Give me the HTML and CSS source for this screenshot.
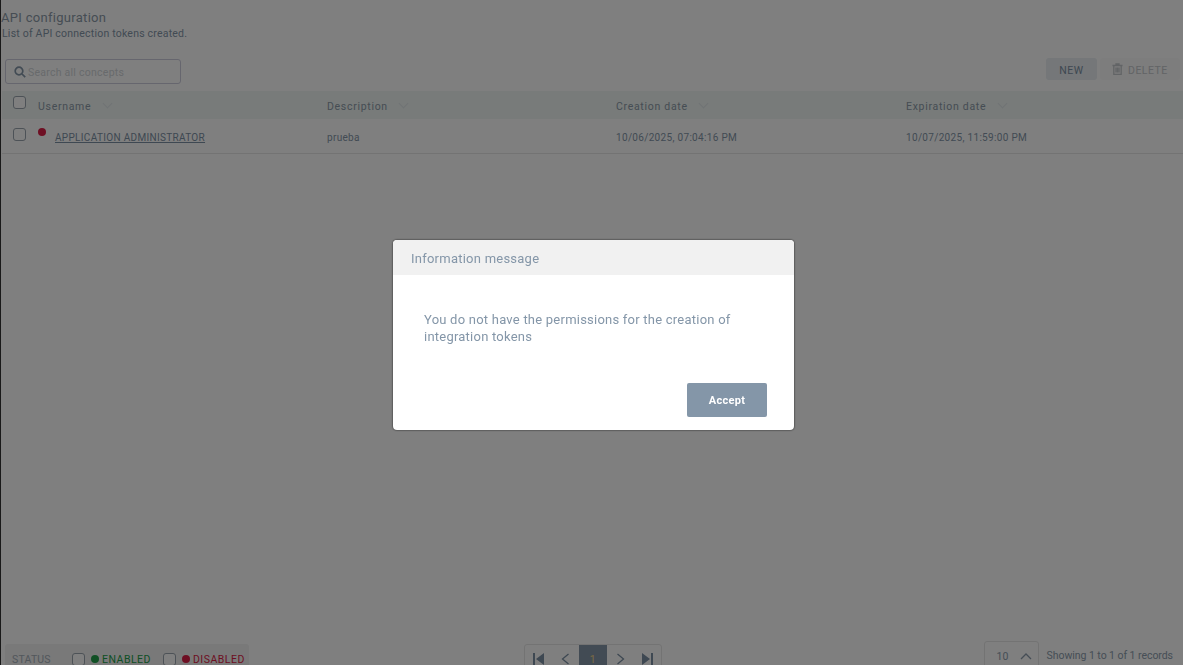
FILE: index.html
```html
<!DOCTYPE html>
<html>
	<head>
		<title>API configuration</title>
		<link rel="stylesheet" href="styles.css">
	</head>
	<body>
		<div class="page">
			<div class="head">
				<h4>API configuration</h4>
				<p>List of API connection tokens created.</p>
			</div>
			<div class="tools">
				<div class="search">
					<svg width="12" height="12" viewBox="0 0 12 12"><circle cx="5" cy="5" r="3.8"/><path d="M8 8l3.2 3.2"/></svg>
					<span>Search all concepts</span>
				</div>
				<div class="actions">
					<button class="b_new" type="button">NEW</button>
					<button class="b_del" type="button">
						<svg width="11" height="12" viewBox="0 0 11 12"><path d="M0.5 2.5h10M4 2.5v-1.5h3v1.5M1.8 2.5v9h7.4v-9M4 4.5v5M5.5 4.5v5M7 4.5v5"/></svg>
						DELETE
					</button>
				</div>
			</div>
			<div class="row row_head">
				<span class="box"></span>
				<div class="cols">
					<div>Username <i class="caret"></i></div>
					<div>Description <i class="caret"></i></div>
					<div>Creation date <i class="caret"></i></div>
					<div>Expiration date <i class="caret"></i></div>
				</div>
			</div>
			<div class="row row_item">
				<span class="box"></span>
				<div class="cols">
					<div class="user"><i class="dot red"></i><a href="#">APPLICATION ADMINISTRATOR</a></div>
					<div>prueba</div>
					<div>10/06/2025, 07:04:16 PM</div>
					<div>10/07/2025, 11:59:00 PM</div>
				</div>
			</div>
			<div class="foot">
				<div class="status">
					<span class="st_label">STATUS</span>
					<span class="box"></span><i class="dot green"></i><span class="on">ENABLED</span>
					<span class="box"></span><i class="dot red"></i><span class="off">DISABLED</span>
				</div>
				<div class="pager">
					<span><svg width="13" height="12" viewBox="0 0 13 12"><path class="fill" d="M1 0h2v12h-2zM12 0v12l-8-6z"/></svg></span>
					<span><svg width="9" height="12" viewBox="0 0 9 12"><path d="M7.5 1l-6 5 6 5"/></svg></span>
					<span class="cur">1</span>
					<span><svg width="9" height="12" viewBox="0 0 9 12"><path d="M1.5 1l6 5-6 5"/></svg></span>
					<span><svg width="13" height="12" viewBox="0 0 13 12"><path class="fill" d="M1 0l8 6-8 6zM10 0h2v12h-2z"/></svg></span>
				</div>
				<div class="records">
					<div class="size">
						<span>10</span>
						<svg width="12" height="8" viewBox="0 0 12 8"><path d="M1 7l5-5 5 5"/></svg>
					</div>
					<span class="showing">Showing 1 to 1 of 1 records</span>
				</div>
			</div>
		</div>
		<div class="overlay">
			<div class="modal">
				<div class="m_head">Information message</div>
				<div class="m_body">You do not have the permissions for the creation of integration tokens</div>
				<div class="m_foot"><button type="button">Accept</button></div>
			</div>
		</div>
	</body>
</html>
```
FILE: styles.css
```css
html, body{
	margin: 0;
	height: 100%;
	overflow: hidden;
	background-color: #fff;
}
*{
	box-sizing: border-box;
}
body{
	font-family: Roboto, "Liberation Sans", sans-serif;
	color: #8496a8;
}
i{
	display: inline-block;
	font-style: normal;
}
button{
	font-family: inherit;
	border: none;
	cursor: pointer;
}
svg{
	fill: none;
	stroke: currentColor;
	stroke-width: 1.3;
}
svg .fill{
	fill: currentColor;
	stroke: none;
}
.page{
	display: flex;
	flex-direction: column;
	height: 690px;
	padding-left: 1px;
	border-left: 1px solid #333;
}
.head{
	padding-top: 10px;
	height: 59px;
}
.head h4{
	margin: 0 0 0 -1px;
	font-size: 13px;
	font-weight: 400;
	line-height: 15px;
	letter-spacing: .3px;
	color: #8c9aa8;
}
.head p{
	margin: 2px 0 0;
	font-size: 10.5px;
	line-height: 14px;
	letter-spacing: .21px;
}
.tools{
	display: flex;
	justify-content: space-between;
	height: 32px;
	padding: 0 3px 0 3px;
}
.search{
	display: flex;
	align-items: center;
	gap: 2px;
	width: 176px;
	height: 25px;
	padding: 2px 0 0 8px;
	border: 1px solid #ccd;
	border-radius: 3px;
	font-size: 10.5px;
	letter-spacing: .25px;
	color: #d0d4d8;
}
.search svg{
	color: #8496a8;
	stroke-width: 1.7;
	margin-top: -2px;
}
.actions{
	display: flex;
	gap: 3px;
	height: 22px;
	margin-top: -1px;
}
.b_new{
	width: 51px;
	padding-top: 3px;
	border-radius: 3px;
	background: #eaeef2;
	font-size: 10.5px;
	letter-spacing: .5px;
	color: #7c90a4;
}
.b_del{
	display: flex;
	align-items: center;
	gap: 5px;
	width: 80px;
	padding: 3px 0 0 12px;
	border-radius: 3px;
	background: #fafafa;
	font-size: 10.5px;
	letter-spacing: .5px;
	color: #c4c8cc;
}
.b_del svg{
	margin-top: -3px;
}
.row{
	display: flex;
	flex: none;
	padding-left: 11px;
	font-size: 10px;
	letter-spacing: .32px;
}
.row_head{
	height: 28px;
	align-items: center;
	background: #f0f7f4;
	font-size: 10.5px;
	letter-spacing: .7px;
	color: #8c9aa8;
}
.row_head .box{
	margin-top: -5px;
}
.row_head .cols{
	padding-top: 2px;
}
.row_item{
	height: 35px;
	align-items: center;
	border-bottom: 1px solid #e6e6e6;
}
.row_item .box{
	margin-top: -3px;
}
.row_item .cols{
	padding-top: 2px;
}
.box{
	display: inline-block;
	flex: none;
	width: 13px;
	height: 13px;
	border: 1px solid #9aa4ae;
	border-radius: 3px;
	background: #fff;
}
.cols{
	display: grid;
	grid-template-columns: 289px 289px 290px 1fr;
	flex: 1;
	margin-left: 12px;
}
.caret{
	width: 7px;
	height: 7px;
	margin: 0 0 3px 9px;
	border-right: 1px solid #e0e6ea;
	border-bottom: 1px solid #e0e6ea;
	transform: rotate(45deg);
}
.dot{
	flex: none;
	width: 8px;
	height: 8px;
	border-radius: 50%;
}
.red{
	background: #dc1e46;
}
.green{
	background: #22a04a;
}
.user{
	display: flex;
	align-items: center;
	gap: 9px;
}
.user .dot{
	margin-top: -10px;
}
.user a{
	color: #7c90a4;
}
.foot{
	display: flex;
	justify-content: space-between;
	margin-top: auto;
	height: 49px;
	padding: 0 10px 0 3px;
}
.status{
	display: flex;
	align-items: center;
	align-self: flex-end;
	width: 244px;
	height: 46px;
	padding: 0 0 16px 7px;
	border-radius: 3px;
	background: #f2f2f2;
	font-size: 10.5px;
	letter-spacing: .5px;
}
.status .box{
	margin-right: 6px;
}
.st_label{
	width: 60px;
	letter-spacing: .2px;
	color: #a4aeb8;
}
.status .dot{
	margin-right: 3px;
}
.on{
	margin-right: 12px;
	color: #22a04a;
}
.off{
	color: #dc1e46;
}
.pager{
	display: flex;
	align-self: flex-end;
	height: 46px;
	margin-right: 47px;
	border: 1px solid #e6e6e6;
	border-radius: 3px;
	color: #7c90a4;
}
.pager span{
	display: flex;
	align-items: center;
	justify-content: center;
	width: 27px;
	padding-bottom: 16px;
}
.pager .cur{
	width: 28px;
	background: #8496a8;
	font-size: 10.5px;
	color: #f4d488;
}
.records{
	display: flex;
	align-items: flex-start;
	gap: 8px;
	font-size: 10.5px;
	letter-spacing: .42px;
}
.size{
	display: flex;
	align-items: center;
	justify-content: space-between;
	width: 55px;
	height: 49px;
	padding: 0 6px 19px 12px;
	border: 1px solid #e6e6e6;
	border-radius: 3px;
	letter-spacing: 0;
	color: #8c9cac;
}
.showing{
	margin-top: 8px;
	letter-spacing: -.05px;
	color: #8c9cac;
}
.overlay{
	position: fixed;
	top: 0;
	left: 0;
	right: 0;
	bottom: 0;
	display: flex;
	align-items: center;
	justify-content: center;
	padding: 5px 0 0 4px;
	background: rgba(0,0,0,.5);
}
.modal{
	width: 401px;
	height: 190px;
	border-radius: 4px;
	overflow: hidden;
	background: #fff;
	box-shadow: 0 0 2px rgba(0,0,0,.9);
}
.m_head{
	height: 35px;
	padding: 0 18px;
	background: #f1f1f1;
	font-size: 13px;
	line-height: 37px;
	letter-spacing: .24px;
	color: #8496a8;
}
.m_body{
	height: 108px;
	padding: 36px 50px 0 31px;
	font-size: 13px;
	line-height: 17px;
	letter-spacing: .23px;
	color: #8496a8;
}
.m_foot{
	display: flex;
	justify-content: flex-end;
	padding-right: 27px;
}
.m_foot button{
	width: 80px;
	height: 34px;
	padding-top: 2px;
	border-radius: 2px;
	background: #8496a8;
	font-size: 11px;
	font-weight: 700;
	letter-spacing: .3px;
	color: #fff;
}
```
